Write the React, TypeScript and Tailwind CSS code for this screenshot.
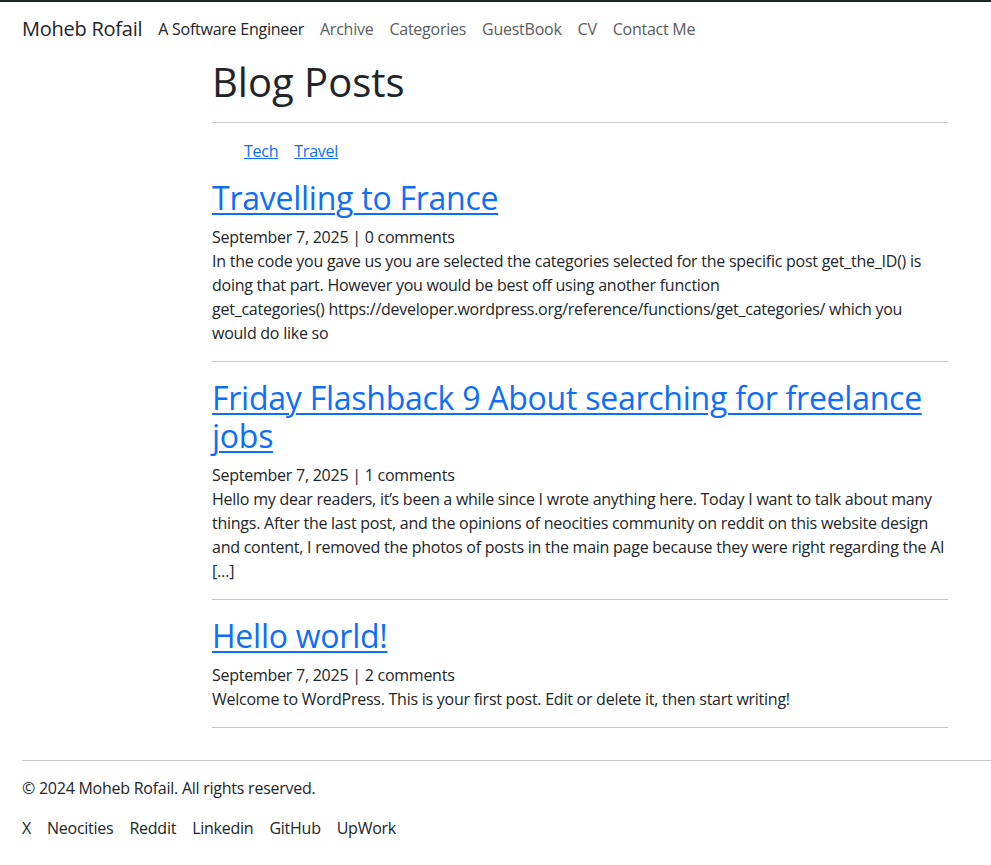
export default function App() {
  const posts = [
    {
      title: 'Travelling to France',
      meta: 'September 7, 2025 | 0 comments',
      body: 'In the code you gave us you are selected the categories selected for the specific post get_the_ID() is doing that part. However you would be best off using another function get_categories()\u00a0https://developer.wordpress.org/reference/functions/get_categories/ which you would do like so',
    },
    {
      title: 'Friday Flashback 9 About searching for freelance jobs',
      meta: 'September 7, 2025 | 1 comments',
      body: 'Hello my dear readers, it\u2019s been a while since I wrote anything here. Today I want to talk about many things. After the last post, and the opinions of neocities community on reddit on this website design and content, I removed the photos of posts in the main page because they were right regarding the AI [\u2026]',
    },
    {
      title: 'Hello world!',
      meta: 'September 7, 2025 | 2 comments',
      body: 'Welcome to WordPress. This is your first post. Edit or delete it, then start writing!',
    },
  ]

  return (
    <div className="min-h-[865px] border-t-2 border-[#212529] bg-white text-[#212529] font-['Open_Sans',sans-serif] text-[16px] leading-6 tracking-[-0.25px]">
      <nav className="flex items-center px-[22px] pt-3 pb-[14px]">
        <span className="mr-4 text-[20px] leading-[30px]">Moheb Rofail</span>
        <span className="mr-2">A Software Engineer</span>
        <ul className="flex">
          {['Archive', 'Categories', 'GuestBook', 'CV', 'Contact Me'].map((l) => (
            <li key={l}>
              <a href="#" className="px-2 text-[#5c5c5c]">
                {l}
              </a>
            </li>
          ))}
        </ul>
      </nav>

      <main className="pl-[212px] pr-[43px]">
        <h1 className="text-[40px] leading-[48px] tracking-normal">Blog Posts</h1>
        <hr className="my-4 border-[#c8c8c8]" />
        <ul className="mb-4 flex gap-4 pl-8">
          <li>
            <a href="#" className="text-[#0d6efd] underline">Tech</a>
          </li>
          <li>
            <a href="#" className="text-[#0d6efd] underline">Travel</a>
          </li>
        </ul>

        {posts.map((p, i) => (
          <article key={p.title} className={i > 0 ? 'pt-px' : ''}>
            <h2 className="mb-2 text-[32px] leading-[38px] tracking-[-0.25px]">
              <a href="#" className="text-[#0d6efd] underline decoration-2 underline-offset-[3px]">
                {p.title}
              </a>
            </h2>
            <p>{p.meta}</p>
            <p>{p.body}</p>
            <hr className="my-4 border-[#c8c8c8]" />
          </article>
        ))}
      </main>

      <footer className="mt-8 pl-[22px]">
        <hr className="mb-[15px] border-[#c8c8c8]" />
        <p>&copy; 2024 Moheb Rofail. All rights reserved.</p>
        <ul className="mt-4 flex gap-4">
          {['X', 'Neocities', 'Reddit', 'Linkedin', 'GitHub', 'UpWork'].map((l) => (
            <li key={l}>
              <a href="#">{l}</a>
            </li>
          ))}
        </ul>
      </footer>
    </div>
  )
}
